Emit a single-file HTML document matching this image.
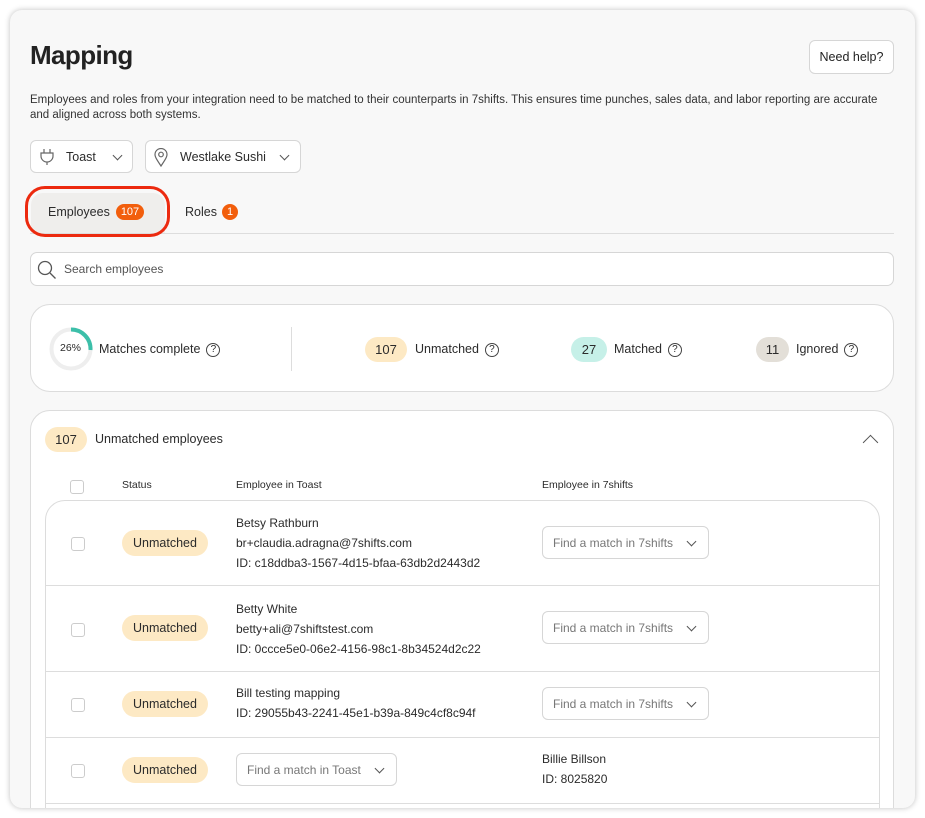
<!DOCTYPE html>
<html><head><style>
*{box-sizing:border-box;margin:0;padding:0}
body{width:925px;height:818px;background:#fff;font-family:"Liberation Sans",sans-serif;color:#2b2b2b;position:relative;overflow:hidden}
.abs{position:absolute}
.outer{left:10px;top:10px;width:905px;height:798px;background:#f8f8f8;border-radius:12px;box-shadow:0 0 6px rgba(0,0,0,.25);overflow:hidden}
.btn{background:#fff;border:1px solid #d6d6d6;border-radius:6px}
.pill{border-radius:14px;display:flex;align-items:center;justify-content:center;font-size:13px}
.q{display:inline-block;width:14px;height:14px;border:1px solid #444;border-radius:50%;font-size:10px;text-align:center;line-height:12px;margin-left:6px;vertical-align:middle}
.cb{width:14px;height:14px;border:1px solid #ccc;border-radius:3px;background:#fff}
.st{background:#fde9c4;border-radius:14px;width:86px;height:26px;font-size:12.5px;display:flex;align-items:center;justify-content:center}
.t12{font-size:12px;line-height:20px}
.dd{background:#fff;border:1px solid #d6d6d6;border-radius:6px;height:33px;font-size:12px;color:#777;display:flex;align-items:center;padding-left:10px}
.chev{position:absolute;width:7px;height:7px;border-right:1.5px solid #555;border-bottom:1.5px solid #555;transform:rotate(45deg)}
</style></head><body>
<div class="abs outer">
 <div class="abs" style="left:20px;top:30px;font-size:26px;font-weight:700;color:#222;letter-spacing:-.6px">Mapping</div>
 <div class="abs btn" style="left:799px;top:30px;width:85px;height:34px;font-size:12.5px;text-align:center;line-height:32px;color:#222">Need help?</div>
 <div class="abs" style="left:20px;top:83px;width:862px;font-size:11.5px;line-height:15px;color:#333">Employees and roles from your integration need to be matched to their counterparts in 7shifts. This ensures time punches, sales data, and labor reporting are accurate and aligned across both systems.</div>
 <div class="abs btn" style="left:20px;top:130px;width:103px;height:33px">
  <svg class="abs" style="left:8px;top:7px" width="16" height="18" viewBox="0 0 16 18" fill="none" stroke="#666" stroke-width="1.2"><path d="M5 1v4M11 1v4M2 5h12v3a6 6 0 0 1-12 0z M8 14v3"/></svg>
  <span class="abs" style="left:35px;top:9px;font-size:12.5px">Toast</span>
  <span class="chev" style="left:83px;top:11px"></span></div>
 <div class="abs btn" style="left:135px;top:130px;width:156px;height:33px">
  <svg class="abs" style="left:8px;top:7px" width="14" height="19" viewBox="0 0 14 19" fill="none" stroke="#666" stroke-width="1.2"><path d="M7 18C3 12 1 9 1 6.5a6 6 0 0 1 12 0C13 9 11 12 7 18z"/><circle cx="7" cy="6.5" r="2.3"/></svg>
  <span class="abs" style="left:34px;top:9px;font-size:12.5px">Westlake Sushi</span>
  <span class="chev" style="left:135px;top:11px"></span></div>
 <div class="abs" style="left:20px;top:223px;width:864px;height:1px;background:#ddd"></div>
 <div class="abs" style="left:21px;top:183px;width:134px;height:40px;background:#efeeec;border-radius:12px 12px 0 0"></div>
 <div class="abs" style="left:15px;top:176px;width:145px;height:51px;border:3px solid #ec2a0f;border-radius:20px"></div>
 <span class="abs" style="left:38px;top:195px;font-size:12.5px">Employees</span>
 <span class="abs pill" style="left:106px;top:194px;width:28px;height:16px;background:#f25e0c;color:#fff;font-size:11px">107</span>
 <span class="abs" style="left:175px;top:195px;font-size:12.5px">Roles</span>
 <span class="abs pill" style="left:212px;top:194px;width:16px;height:16px;background:#f25e0c;color:#fff;font-size:11px">1</span>
 <div class="abs btn" style="left:20px;top:242px;width:864px;height:34px;border-radius:7px">
  <svg class="abs" style="left:6px;top:7px" width="20" height="20" viewBox="0 0 20 20" fill="none" stroke="#555" stroke-width="1.3"><circle cx="8" cy="8" r="6.5"/><path d="M13 13l5.5 5.5"/></svg>
  <span class="abs" style="left:33px;top:9px;font-size:12px;color:#555">Search employees</span></div>
 <div class="abs" style="left:20px;top:294px;width:864px;height:88px;background:#fff;border:1px solid #dcdcdc;border-radius:20px">
  <svg class="abs" style="left:18px;top:22px" width="44" height="44" viewBox="0 0 44 44"><circle cx="22" cy="22" r="19.5" fill="none" stroke="#eee" stroke-width="4"/><path d="M22 2.5A19.5 19.5 0 0 1 41.5 23" fill="none" stroke="#3cbfa9" stroke-width="4"/></svg>
  <span class="abs" style="left:29px;top:37px;font-size:10.5px">26%</span>
  <span class="abs" style="left:68px;top:37px;font-size:12.5px">Matches complete<span class="q">?</span></span>
  <div class="abs" style="left:260px;top:22px;width:1px;height:44px;background:#ddd"></div>
  <span class="abs pill" style="left:334px;top:32px;width:42px;height:25px;background:#fde9c4">107</span>
  <span class="abs" style="left:384px;top:37px;font-size:12.5px">Unmatched<span class="q">?</span></span>
  <span class="abs pill" style="left:540px;top:32px;width:36px;height:25px;background:#c6f0e8">27</span>
  <span class="abs" style="left:583px;top:37px;font-size:12.5px">Matched<span class="q">?</span></span>
  <span class="abs pill" style="left:725px;top:32px;width:33px;height:25px;background:#e3dfd8">11</span>
  <span class="abs" style="left:765px;top:37px;font-size:12.5px">Ignored<span class="q">?</span></span>
 </div>
 <div class="abs" style="left:20px;top:400px;width:864px;height:420px;background:#fff;border:1px solid #dcdcdc;border-radius:20px">
  <span class="abs pill" style="left:14px;top:16px;width:42px;height:25px;background:#fde9c4">107</span>
  <span class="abs" style="left:64px;top:21px;font-size:12.5px">Unmatched employees</span>
  <span class="abs" style="left:834px;top:26px;width:11px;height:11px;border-left:1.5px solid #555;border-top:1.5px solid #555;transform:rotate(45deg)"></span>
  <div class="abs cb" style="left:39px;top:69px"></div>
  <span class="abs" style="left:91px;top:68px;font-size:10.5px">Status</span>
  <span class="abs" style="left:205px;top:68px;font-size:10.5px">Employee in Toast</span>
  <span class="abs" style="left:511px;top:68px;font-size:10.5px">Employee in 7shifts</span>
  <div class="abs" style="left:14px;top:89px;width:835px;height:340px;border:1px solid #dcdcdc;border-radius:20px">
   <div class="abs cb" style="left:25px;top:36px"></div><div class="abs st" style="left:76px;top:29px">Unmatched</div>
   <div class="abs t12" style="left:190px;top:12px">Betsy Rathburn<br>br+claudia.adragna@7shifts.com<br>ID: c18ddba3-1567-4d15-bfaa-63db2d2443d2</div>
   <div class="abs dd" style="left:496px;top:25px;width:167px">Find a match in 7shifts<span class="chev" style="left:145px;top:11px"></span></div>
   <div class="abs" style="left:0;top:84px;width:833px;height:1px;background:#ddd"></div>
   <div class="abs cb" style="left:25px;top:122px"></div><div class="abs st" style="left:76px;top:114px">Unmatched</div>
   <div class="abs t12" style="left:190px;top:98px">Betty White<br>betty+ali@7shiftstest.com<br>ID: 0ccce5e0-06e2-4156-98c1-8b34524d2c22</div>
   <div class="abs dd" style="left:496px;top:110px;width:167px">Find a match in 7shifts<span class="chev" style="left:145px;top:11px"></span></div>
   <div class="abs" style="left:0;top:170px;width:833px;height:1px;background:#ddd"></div>
   <div class="abs cb" style="left:25px;top:197px"></div><div class="abs st" style="left:76px;top:190px">Unmatched</div>
   <div class="abs t12" style="left:190px;top:182px">Bill testing mapping<br>ID: 29055b43-2241-45e1-b39a-849c4cf8c94f</div>
   <div class="abs dd" style="left:496px;top:186px;width:167px">Find a match in 7shifts<span class="chev" style="left:145px;top:11px"></span></div>
   <div class="abs" style="left:0;top:236px;width:833px;height:1px;background:#ddd"></div>
   <div class="abs cb" style="left:25px;top:263px"></div><div class="abs st" style="left:76px;top:256px">Unmatched</div>
   <div class="abs dd" style="left:190px;top:252px;width:161px">Find a match in Toast<span class="chev" style="left:139px;top:11px"></span></div>
   <div class="abs t12" style="left:496px;top:248px">Billie Billson<br>ID: 8025820</div>
   <div class="abs" style="left:0;top:302px;width:833px;height:1px;background:#ddd"></div>
  </div>
 </div>
</div>
</body></html>
